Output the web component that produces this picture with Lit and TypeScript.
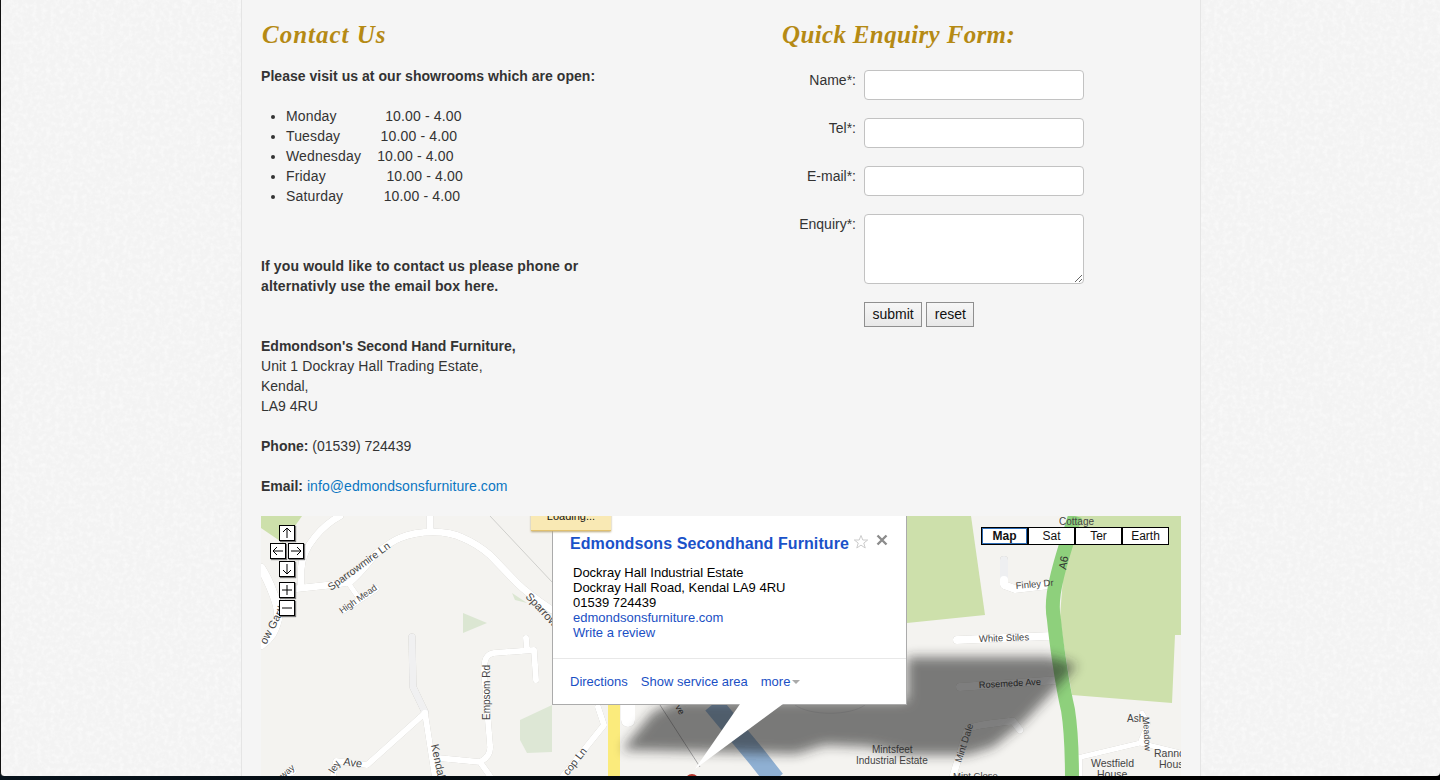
import { LitElement, html, css, svg } from "lit";
import { customElement } from "lit/decorators.js";

const mapArt = svg`
  <rect x="261" y="516" width="920" height="264" fill="#f4f3f0"/>
  <path d="M261 516H302L283 543L261 528Z" fill="#cde0ab"/>
  <path d="M463 613L487 623L463 633Z" fill="#dbe6d2"/>
  <path d="M512 593L527 603L515 600Z" fill="#dbe6d2"/>
  <path d="M520 720L552 705V752L527 753L520 740Z" fill="#dde7d5"/>
  <path d="M907 516H971L985 615L907 623Z" fill="#cde0ab"/>
  <path d="M1075 516H1181V635H1175L1172 703L1072 695L1063 640L1060 617L1063 577Z" fill="#cde0ab"/>
  <path d="M490 516L552 582" stroke="#cfcfcc" fill="none"/>
  <path d="M660 705L700 767" stroke="#aaa" fill="none"/>
  <g class="roads" fill="none" stroke="#fff" stroke-linecap="round" stroke-linejoin="round">
    <path stroke-width="7" d="M340 516C325 524 302 545 301 570V586"/>
    <path stroke-width="7" d="M283 597C290 590 296 588 302 588L330 585L350 582C362 572 368 562 377 553C386 546 392 541 400 538C412 533 422 532 433 532C445 532 455 534 463 538C475 543 483 549 490 555L517 583C528 594 540 602 552 610"/>
    <path stroke-width="7" d="M430 516V530"/>
    <path stroke-width="5" d="M349 584L358 597"/>
    <path stroke-width="6" d="M343 611L376 589"/>
    <path stroke-width="9" d="M261 568C266 576 270 585 273 593C277 603 279 611 278 617C277 625 274 630 272 634C268 640 264 643 261 645"/>
    <path stroke-width="7" stroke="#f0f0f1" d="M412 637L413 687L425 712"/>
    <path stroke-width="6" d="M425 713L367 765L336 761L333 776"/>
    <path stroke-width="6" d="M425 713L435 778"/>
    <path stroke-width="6" d="M438 758L480 762C488 758 491 752 490 745L484 672C484 660 486 654 494 653L534 650L536 680M526 638L527 650M480 762L490 776"/>
    <path stroke-width="8" d="M287 773L292 771"/>
    <path stroke-width="6" d="M598 707L604 725L563 776"/>
    <path stroke-width="14" d="M628 705V720"/>
    <path stroke-width="8" stroke="#eeeff1" d="M1004 560V580"/>
    <path stroke-width="8" d="M1004 580V585L1015 589L1050 585"/>
    <path stroke-width="8" d="M957 640L1050 636"/>
    <path stroke-width="8" d="M960 687L1058 680"/>
    <path stroke-width="7" d="M953 776L967 730C970 726 985 724 1013 721L1020 730"/>
    <path stroke-width="5" d="M1077 758L1140 743L1181 753M1140 743L1148 723L1142 713M1080 760V778"/>
  </g>
  <path d="M1075 516C1071 530 1062 555 1057 577C1052 597 1052 610 1054 620C1056 640 1062 685 1068 710C1072 735 1072 760 1072 780" fill="none" stroke="#8ed07c" stroke-width="14"/>
  <path d="M614 704V780" stroke="#fbeb7c" stroke-width="12"/>
  <path d="M713 704L757 757L775 780" stroke="#8fb0d3" stroke-width="20" fill="none"/>
  <path d="M795 705C810 716 850 716 865 705" stroke="#ddd" fill="none"/>
  <circle cx="692" cy="781" r="7" fill="#b5342a"/>
  <g font-family="'Liberation Sans', sans-serif" font-size="10" fill="#444">
    <text x="331" y="591" transform="rotate(-36 331 591)" font-size="10.5">Sparrowmire Ln</text>
    <text x="342" y="614" transform="rotate(-35 342 614)" font-size="9">High Mead</text>
    <text x="525" y="597" transform="rotate(47 525 597)" font-size="11">Sparrow</text>
    <text x="266" y="645" transform="rotate(-62 266 645)" font-size="11">ow Garth</text>
    <text x="490" y="720" transform="rotate(-90 490 720)">Empsom Rd</text>
    <text x="431" y="745" transform="rotate(78 431 745)" font-size="11">Kendal</text>
    <text x="343" y="765" transform="rotate(8 343 765)" font-size="11">Ave</text>
    <text x="334" y="774" transform="rotate(-58 334 774)" font-size="10">ley</text>
    <text x="283" y="779" transform="rotate(-40 283 779)" font-size="9">way</text>
    <text x="1059" y="525" font-size="10">Cottage</text>
    <text x="1016" y="589" transform="rotate(-5 1016 589)" font-size="9.5">Finley Dr</text>
    <text x="979" y="642" transform="rotate(-2 979 642)" font-size="9.5">White Stiles</text>
    <text x="979" y="688" transform="rotate(-3 979 688)" font-size="9.2" fill="#222">Rosemede Ave</text>
    <text x="872" y="753" font-size="10">Mintsfeet</text>
    <text x="856" y="764" font-size="10">Industrial Estate</text>
    <text x="961" y="763" transform="rotate(-72 961 763)" font-size="9.5">Mint Dale</text>
    <text x="953" y="779" font-size="9.5">Mint Close</text>
    <text x="1127" y="722" font-size="10">Ash</text>
    <text x="1143" y="717" transform="rotate(87 1143 717)" font-size="9">Meadow</text>
    <text x="1154" y="757" font-size="10.5">Rannc</text>
    <text x="1159" y="768" font-size="10.5">Hous</text>
    <text x="1091" y="767" font-size="10.5">Westfield</text>
    <text x="1097" y="778" font-size="10.5">House</text>
    <text x="1066" y="570" transform="rotate(-80 1066 570)" font-size="11" fill="#333">A6</text>
    <text x="568" y="776" transform="rotate(-52 568 776)" font-size="10.5">cop Ln</text>
    <text x="675" y="707" transform="rotate(60 675 707)" font-size="9" fill="#222">ve</text>
  </g>
  <defs><filter id="blur" x="-10%" y="-30%" width="120%" height="160%"><feGaussianBlur stdDeviation="6"/></filter></defs>
  <path filter="url(#blur)" opacity="0.58" fill="#222" d="M907 657H1050L1077 665L1057 687L1023 723L993 747L967 755H907L870 747L825 745L796 754L622 750L653 712L680 700H907Z"/>
`;

@customElement("app-root")
export class AppRoot extends LitElement {
  static styles = css`
    :host { display: block; height: 780px; overflow: hidden; background: linear-gradient(90deg, #07131c, #000 80%); font-family: "Liberation Sans", Arial, sans-serif; color: #333; }
    .window { position: relative; height: 776px; overflow: hidden; background: #f3f3f3; border-left: 1px solid #111; border-radius: 0 0 4px 4px; box-sizing: border-box; }
    .noise { position: absolute; left: 0; top: 0; display: block; }
    .page { position: relative; width: 920px; margin-left: 240px; padding: 0 19px; height: 776px; background: #f5f5f5; border-left: 1px solid #e5e5e5; border-right: 1px solid #e5e5e5; overflow: hidden; }
    .columns { display: flex; height: 516px; }
    .left { width: 521px; flex: none; padding-top: 20px; box-sizing: border-box; }
    .right { padding-top: 20px; flex: 1; }
    h2 { margin: 0; font: italic 700 25px/30px "Liberation Serif", serif; color: #b58a14; height: 30px; }
    .left h2 { letter-spacing: 1px; margin-left: 1px; }
    .right h2 { letter-spacing: 0.35px; }
    p { margin: 0; font-size: 14px; line-height: 20px; }
    .intro { margin-top: 16px; font-weight: 700; letter-spacing: 0.04px; }
    ul { margin: 20px 0 0; padding: 0 0 0 25px; font-size: 14px; line-height: 20px; width: 300px; letter-spacing: 0.15px; }
    li { white-space: pre; }
    .contact { margin-top: 50px; font-weight: 700; width: 340px; letter-spacing: 0.13px; }
    .addr { margin-top: 40px; }
    .addr span { letter-spacing: 0.11px; }
    .gap { margin-top: 20px; }
    b { font-weight: 700; }
    a.mail { color: #0a76c2; text-decoration: none; letter-spacing: 0.07px; }
    form { margin-top: 20px; display: grid; grid-template-columns: 74px 220px; column-gap: 8px; row-gap: 18px; }
    label { font-size: 14px; line-height: 20px; text-align: right; color: #333; }
    input, textarea { box-sizing: border-box; width: 220px; height: 30px; margin: 0; background: #fff; border: 1px solid #c2c2c2; border-radius: 4px; display: block; }
    textarea { height: 70px; }
    .btns { grid-column: 2; display: flex; gap: 4px; }
    button { height: 25px; padding: 0 7.5px 2px; font: 14px "Liberation Sans", sans-serif; color: #111; background: linear-gradient(#f6f6f6, #e8e8e8); border: 1px solid #8f8f8f; border-radius: 0; }
    .map { position: relative; width: 920px; height: 264px; overflow: hidden; background: #f4f3f0; }
    .map svg.art { display: block; }
    .roads { filter: drop-shadow(0 0 0.6px #bdbbb4); }
    .ctl { position: absolute; width: 14px; height: 14px; background: #fff; border: 1px solid #000; box-shadow: 1px 1px 1px #777; }
    .ctl svg { display: block; }
    .types { position: absolute; left: 720px; top: 11px; display: flex; }
    .types div { width: 45px; height: 16px; background: #fff; border: 1px solid #000; font: 12px/16px "Liberation Sans", sans-serif; color: #111; text-align: center; }
    .types .on { font-weight: 700; box-shadow: inset 0 0 0 1px #2d6cb5; }
    .loading { position: absolute; left: 270px; top: -7px; width: 80px; height: 22px; box-sizing: border-box; background: #f9e9b4; border-bottom: 1px solid #e2c16e; box-shadow: 0 1px 2px #b9a77a; font: 11px/14px "Liberation Sans", sans-serif; color: #111; text-align: center; z-index: 3; }
    .bubble { position: absolute; left: 291px; top: 0; width: 355px; height: 189px; box-sizing: border-box; background: #fff; border: 1px solid #ababab; border-top: 0; z-index: 2; color: #000; }
    .title { position: absolute; left: 17px; top: 18px; font: 700 16px/20px "Liberation Sans", sans-serif; letter-spacing: 0.08px; color: #1a52c9; white-space: nowrap; }
    .star { position: absolute; left: 300px; top: 18px; }
    .close { position: absolute; left: 323px; top: 18px; }
    .info { position: absolute; left: 20px; top: 49px; font-size: 13px; line-height: 15px; white-space: nowrap; }
    .info a, .links a { color: #1a4fc4; text-decoration: none; display: block; }
    .rule { position: absolute; left: 0; right: 0; top: 142px; border-top: 1px solid #e8e8e8; }
    .links { position: absolute; left: 17px; top: 158px; display: flex; gap: 13px; font-size: 13px; line-height: 16px; white-space: nowrap; }
    .caret { display: inline-block; width: 0; height: 0; border: 4px solid transparent; border-top-color: #aaa; border-bottom: 0; margin-left: 2px; vertical-align: 2px; }
    .tail { position: absolute; left: 0; top: 0; z-index: 2; pointer-events: none; }
  `;

  ctl(x: number, y: number, d: string) {
    return html`<div class="ctl" style="left:${x}px;top:${y}px"><svg width="14" height="14" viewBox="0 0 14 14" fill="none" stroke="#000"><path d=${d}/></svg></div>`;
  }

  render() {
    return html`
      <div class="window">
        <svg class="noise" width="1440" height="776">
          <filter id="grain"><feTurbulence type="fractalNoise" baseFrequency="0.22" numOctaves="3" seed="4"/><feColorMatrix values="0 0 0 0 1  0 0 0 0 1  0 0 0 0 1  0 0 0 1.1 -0.45"/></filter>
          <rect width="1440" height="776" filter="url(#grain)"/>
        </svg>
        <div class="page">
          <div class="columns">
            <div class="left">
              <h2>Contact Us</h2>
              <p class="intro">Please visit us at our showrooms which are open:</p>
              <ul>
                <li>Monday            10.00 - 4.00</li>
                <li>Tuesday          10.00 - 4.00</li>
                <li>Wednesday    10.00 - 4.00</li>
                <li>Friday               10.00 - 4.00</li>
                <li>Saturday          10.00 - 4.00</li>
              </ul>
              <p class="contact">If you would like to contact us please phone or alternativly use the email box here.</p>
              <p class="addr"><b>Edmondson's Second Hand Furniture,</b><br><span>Unit 1 Dockray Hall Trading Estate,</span><br>Kendal,<br>LA9 4RU</p>
              <p class="gap"><b>Phone:</b> (01539) 724439</p>
              <p class="gap"><b>Email:</b> <a class="mail" href="#">info@edmondsonsfurniture.com</a></p>
            </div>
            <div class="right">
              <h2>Quick Enquiry Form:</h2>
              <form>
                <label>Name*:</label><input />
                <label>Tel*:</label><input />
                <label>E-mail*:</label><input />
                <label>Enquiry*:</label><textarea></textarea>
                <div class="btns"><button type="button">submit</button><button type="button">reset</button></div>
              </form>
            </div>
          </div>
          <div class="map">
            <svg class="art" width="920" height="264" viewBox="261 516 920 264">${mapArt}</svg>
            ${this.ctl(18, 9, "M7 12V2M3 6L7 2L11 6")}
            ${this.ctl(9, 27, "M12 7H2M6 3L2 7L6 11")}
            ${this.ctl(27, 27, "M2 7H12M8 3L12 7L8 11")}
            ${this.ctl(18, 45, "M7 2V12M3 8L7 12L11 8")}
            ${this.ctl(18, 66, "M7 2V12M2 7H12")}
            ${this.ctl(18, 84, "M2 7H12")}
            <div class="types"><div class="on">Map</div><div>Sat</div><div>Ter</div><div>Earth</div></div>
            <div class="loading">Loading...</div>
            <div class="bubble">
              <div class="title">Edmondsons Secondhand Furniture</div>
              <svg class="star" width="16" height="16" viewBox="0 0 16 16"><path d="M8 1.5L9.8 6H14.7L10.8 9L12.2 14L8 11.1L3.8 14L5.2 9L1.3 6H6.2Z" fill="#fff" stroke="#ccc"/></svg>
              <svg class="close" width="12" height="12" viewBox="0 0 12 12"><path d="M1.5 1.5L10.5 10.5M10.5 1.5L1.5 10.5" stroke="#8c8c8c" stroke-width="2.4"/></svg>
              <div class="info">Dockray Hall Industrial Estate<br>Dockray Hall Road, Kendal LA9 4RU<br>01539 724439<a href="#">edmondsonsfurniture.com</a><a href="#">Write a review</a></div>
              <div class="rule"></div>
              <div class="links"><a href="#">Directions</a><a href="#">Show service area</a><a href="#">more<span class="caret"></span></a></div>
            </div>
            <svg class="tail" width="920" height="264" viewBox="261 516 920 264"><path d="M740 704H783L695 769Z" fill="#fff"/></svg>
          </div>
        </div>
      </div>
    `;
  }
}
